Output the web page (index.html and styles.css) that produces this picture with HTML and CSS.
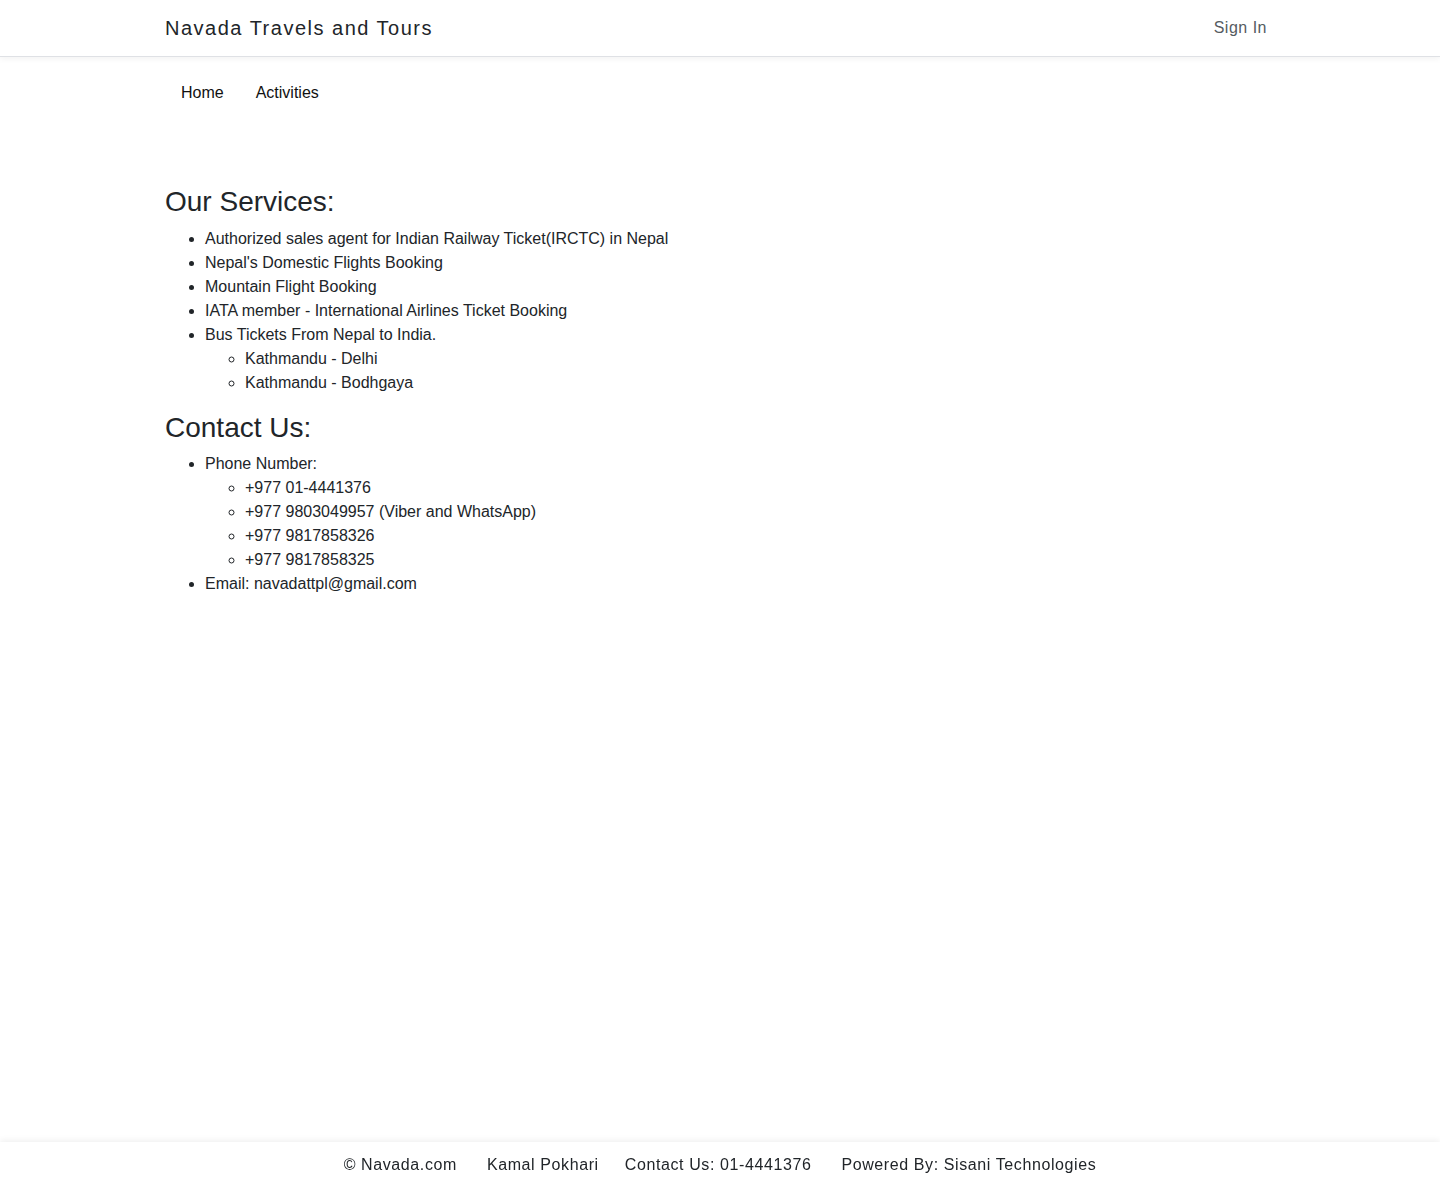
FILE: index.html
```html
<!DOCTYPE html>
<html lang="en">
<head>
<meta charset="utf-8">
<title>Navada Travels and Tours</title>
<link rel="stylesheet" href="styles.css">
</head>
<body>
<header class="topbar">
  <div class="container topbar-inner">
    <a class="brand" href="#">Navada Travels and Tours</a>
    <a class="signin" href="#">Sign In</a>
  </div>
</header>
<nav class="container subnav">
  <a class="subnav-link" href="#">Home</a>
  <a class="subnav-link" href="#">Activities</a>
</nav>
<main class="container content">
  <h3 class="section-title">Our Services:</h3>
  <ul class="list">
    <li>Authorized sales agent for Indian Railway Ticket(IRCTC) in Nepal</li>
    <li>Nepal's Domestic Flights Booking</li>
    <li>Mountain Flight Booking</li>
    <li>IATA member - International Airlines Ticket Booking</li>
    <li>Bus Tickets From Nepal to India.
      <ul class="sublist">
        <li>Kathmandu - Delhi</li>
        <li>Kathmandu - Bodhgaya</li>
      </ul>
    </li>
  </ul>
  <h3 class="section-title">Contact Us:</h3>
  <ul class="list">
    <li>Phone Number:
      <ul class="sublist">
        <li>+977 01-4441376</li>
        <li>+977 9803049957 (Viber and WhatsApp)</li>
        <li>+977 9817858326</li>
        <li>+977 9817858325</li>
      </ul>
    </li>
    <li>Email: navadattpl@gmail.com</li>
  </ul>
</main>
<footer class="footer">
  <span class="f-item f-copy">© Navada.com</span>
  <span class="f-item f-loc">Kamal Pokhari</span>
  <span class="f-item f-contact">Contact Us: 01-4441376</span>
  <span class="f-item f-power">Powered By: Sisani Technologies</span>
</footer>
</body>
</html>
```
FILE: styles.css
```css
* { box-sizing: border-box; }
html, body { margin: 0; padding: 0; }
body {
  font-family: "Liberation Sans", Arial, sans-serif;
  font-size: 16px;
  line-height: 1.5;
  color: #212529;
  background: #fff;
  min-height: 1187px;
}
a { text-decoration: none; }
.container {
  width: 1140px;
  margin: 0 auto;
  padding: 0 15px;
}
.topbar {
  height: 57px;
  border-bottom: 1px solid #dfe1e5;
  box-shadow: 0 2px 6px rgba(0,0,0,0.05);
  background: #fff;
}
.topbar-inner {
  height: 56px;
  display: flex;
  align-items: center;
  justify-content: space-between;
}
.brand {
  font-size: 20px;
  letter-spacing: 1.5px;
  color: #212529;
  line-height: 30px;
}
.signin {
  font-size: 16px;
  letter-spacing: 0.5px;
  color: #555b61;
  padding: 8px;
}
.subnav {
  display: flex;
  margin-top: 24px;
}
.subnav-link {
  color: #111;
  padding: 0 16px;
  line-height: 24px;
}
.content {
  padding-top: 80px;
}
.section-title {
  font-size: 28px;
  font-weight: 500;
  line-height: 1.2;
  margin: 0 0 8px;
  color: #212529;
}
.list {
  margin: 0 0 16px;
  padding-left: 40px;
}
.sublist {
  margin: 0;
  padding-left: 40px;
  list-style-type: circle;
}
.footer {
  position: fixed;
  left: 0;
  right: 0;
  bottom: 0;
  height: 45px;
  background: #fff;
  box-shadow: 0 -2px 6px rgba(0,0,0,0.06);
  display: flex;
  justify-content: center;
  align-items: center;
  letter-spacing: 0.6px;
  color: #212529;
}
.f-item { line-height: 24px; }
.f-copy { margin-right: 30px; }
.f-loc { margin-right: 26px; }
.f-contact { margin-right: 30px; }
```
